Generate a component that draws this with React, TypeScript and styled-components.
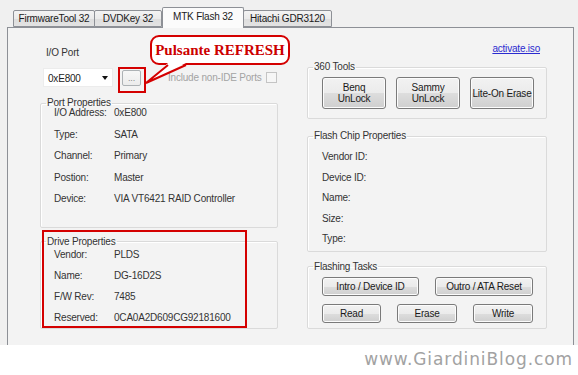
import styled, { createGlobalStyle } from "styled-components";

const GlobalStyle = createGlobalStyle`
  html, body {
    margin: 0;
    padding: 0;
    background: #fff;
  }
  body {
    font-family: "Liberation Sans", Arial, sans-serif;
  }
`;

const portRows = [
  ["I/O Address:", "0xE800"],
  ["Type:", "SATA"],
  ["Channel:", "Primary"],
  ["Postion:", "Master"],
  ["Device:", "VIA VT6421 RAID Controller"],
];

const driveRows = [
  ["Vendor:", "PLDS"],
  ["Name:", "DG-16D2S"],
  ["F/W Rev:", "7485"],
  ["Reserved:", "0CA0A2D609CG92181600"],
];

const chipRows = ["Vendor ID:", "Device ID:", "Name:", "Size:", "Type:"];

const App = () => {
  return (
    <Page>
      <GlobalStyle />
      <Window>
        <TabStrip>
          <Tab $w={82}>FirmwareTool 32</Tab>
          <Tab $w={68}>DVDKey 32</Tab>
          <Tab $w={82} $active>
            MTK Flash 32
          </Tab>
          <Tab $w={89}>Hitachi GDR3120</Tab>
        </TabStrip>
        <Panel>
          <LeftCol>
            <FieldLabel>I/O Port</FieldLabel>
            <PortRow>
              <Combo>0xE800</Combo>
              <Marked>
                <DotsButton>...</DotsButton>
              </Marked>
              <NonIde>
                Include non-IDE Ports
                <Check />
              </NonIde>
            </PortRow>
            <Group $mt={10}>
              <Legend>Port Properties</Legend>
              <Rows $mt={-7} $pb={17}>
                {portRows.map(([k, v]) => (
                  <Row key={k} $h={21.5}>
                    <Key>{k}</Key>
                    <span>{v}</span>
                  </Row>
                ))}
              </Rows>
            </Group>
            <DriveWrap>
              <Group>
                <Legend>Drive Properties</Legend>
                <Rows $mt={-3.5} $pb={0}>
                  {driveRows.map(([k, v]) => (
                    <Row key={k} $h={21}>
                      <Key>{k}</Key>
                      <span>{v}</span>
                    </Row>
                  ))}
                </Rows>
              </Group>
              <RedFrame />
            </DriveWrap>
          </LeftCol>

          <RightCol>
            <Link>activate.iso</Link>
            <Group $mt={6}>
              <Legend>360 Tools</Legend>
              <ButtonRow $mt={4} $pb={9} $gap={10}>
                <Button $w={64} $h={32}>
                  Benq
                  <br />
                  UnLock
                </Button>
                <Button $w={64} $h={32}>
                  Sammy
                  <br />
                  UnLock
                </Button>
                <Button $w={64} $h={32}>
                  Lite-On Erase
                </Button>
              </ButtonRow>
            </Group>
            <Group $mt={11}>
              <Legend>Flash Chip Properties</Legend>
              <Rows $mt={5} $pb={1} $pl={14}>
                {chipRows.map((k) => (
                  <Row key={k} $h={20.5}>
                    <span>{k}</span>
                  </Row>
                ))}
              </Rows>
            </Group>
            <Group $mt={9}>
              <Legend>Flashing Tasks</Legend>
              <ButtonRow $mt={4} $pb={0} $gap={16}>
                <Button $w={97} $h={19}>
                  Intro / Device ID
                </Button>
                <Button $w={98} $h={19}>
                  Outro / ATA Reset
                </Button>
              </ButtonRow>
              <ButtonRow $mt={8} $pb={5} $gap={16}>
                <Button $w={59} $h={19}>
                  Read
                </Button>
                <Button $w={60} $h={19}>
                  Erase
                </Button>
                <Button $w={60} $h={19}>
                  Write
                </Button>
              </ButtonRow>
            </Group>
          </RightCol>
        </Panel>
      </Window>
      <Watermark>www.GiardiniBlog.com</Watermark>

      <Bubble>Pulsante REFRESH</Bubble>
      <Tail width="60" height="40" viewBox="0 0 60 40">
        <polygon points="28,1 6,21 46,1" fill="#fff" />
        <polyline
          points="28,3 6,21 46,3"
          fill="none"
          stroke="#d40000"
          strokeWidth="2"
          strokeLinejoin="miter"
        />
      </Tail>
    </Page>
  );
};

export default App;

const Page = styled.div`
  position: relative;
  width: 578px;
  height: 375px;
  overflow: hidden;
  background: #fff;
  font-size: 10px;
  letter-spacing: -0.2px;
  color: #333;
`;

const Window = styled.div`
  height: 345px;
  background: #f0f0f0;
`;

const TabStrip = styled.div`
  height: 27px;
  padding-left: 14px;
  display: flex;
  align-items: flex-end;
`;

const Tab = styled.div<{ $w: number; $active?: boolean }>`
  box-sizing: border-box;
  width: ${(p) => p.$w}px;
  height: ${(p) => (p.$active ? 21 : 17)}px;
  margin-bottom: ${(p) => (p.$active ? -1 : 0)}px;
  margin-left: ${(p) => (p.$active ? 0 : -1)}px;
  position: relative;
  z-index: ${(p) => (p.$active ? 1 : 0)};
  border: 1px solid #8d9096;
  border-bottom: ${(p) => (p.$active ? "none" : "1px solid #8d9096")};
  border-radius: 2px 2px 0 0;
  background: ${(p) =>
    p.$active
      ? "#fbfbfb"
      : "linear-gradient(#f3f3f3, #ebebeb 50%, #dddddd 51%, #e3e3e3)"};
  display: flex;
  align-items: ${(p) => (p.$active ? "flex-start" : "center")};
  padding-top: ${(p) => (p.$active ? 3 : 0)}px;
  justify-content: center;
  color: #1a1a1a;
  white-space: nowrap;
`;

const Panel = styled.div`
  box-sizing: border-box;
  width: 567px;
  height: 318px;
  margin-left: 7px;
  border: 1px solid #8d9096;
  border-bottom: none;
  background: #f3f3f3;
  padding: 17px 0 0 32px;
  display: flex;
  gap: 29px;
`;

const LeftCol = styled.div`
  width: 238px;
  padding-top: 2px;
  display: flex;
  flex-direction: column;
`;

const RightCol = styled.div`
  width: 240px;
  display: flex;
  flex-direction: column;
`;

const FieldLabel = styled.div`
  margin-left: 6px;
  line-height: 12px;
`;

const PortRow = styled.div`
  margin-top: 9px;
  height: 19px;
  display: flex;
  align-items: center;
`;

const Combo = styled.div`
  position: relative;
  box-sizing: border-box;
  margin-left: 3px;
  width: 70px;
  height: 19px;
  padding-left: 4px;
  line-height: 19px;
  background: #fff;
  border: 1px solid #ececec;
  color: #222;

  &::after {
    content: "";
    position: absolute;
    right: 4px;
    top: 7px;
    border-left: 3.5px solid transparent;
    border-right: 3.5px solid transparent;
    border-top: 4px solid #111;
  }
`;

const Marked = styled.span`
  position: relative;
  margin-left: 9px;
  display: flex;

  &::after {
    content: "";
    position: absolute;
    left: -4px;
    top: -3px;
    right: -5px;
    bottom: -7px;
    border: 2px solid #d40000;
  }
`;

const DotsButton = styled.div`
  box-sizing: border-box;
  width: 19px;
  height: 16px;
  border: 1px solid #adb2b5;
  border-radius: 2px;
  background: linear-gradient(#f7f7f7, #ececec);
  color: #8a8a8a;
  font-size: 9px;
  text-align: center;
  line-height: 15px;
`;

const NonIde = styled.div`
  margin-left: 27px;
  color: #a3a3a3;
  display: flex;
  align-items: center;
  gap: 4px;
  white-space: nowrap;
`;

const Check = styled.span`
  box-sizing: border-box;
  width: 11px;
  height: 11px;
  border: 1px solid #c4c4c4;
  background: #f6f6f6;
`;

const Group = styled.fieldset<{ $mt?: number }>`
  box-sizing: border-box;
  margin: ${(p) => p.$mt ?? 0}px 0 0 0;
  padding: 0;
  min-width: 0;
  width: 100%;
  border: 1px solid #dadada;
  border-radius: 2px;
  box-shadow: inset 1px 1px 0 #fff;
`;

const Legend = styled.legend`
  margin-left: 5px;
  padding: 0 1px;
  line-height: 12px;
  color: #333;
`;

const Rows = styled.div<{ $mt: number; $pb: number; $pl?: number }>`
  margin-top: ${(p) => p.$mt}px;
  padding: 0 0 ${(p) => p.$pb}px ${(p) => p.$pl ?? 13}px;
`;

const Row = styled.div<{ $h: number }>`
  height: ${(p) => p.$h}px;
  line-height: ${(p) => p.$h}px;
  display: flex;
  white-space: nowrap;
`;

const Key = styled.span`
  width: 60px;
`;

const DriveWrap = styled.div`
  position: relative;
  margin-top: 8px;
`;

const RedFrame = styled.div`
  position: absolute;
  left: 2px;
  top: -6px;
  width: 205px;
  height: 98px;
  box-sizing: border-box;
  border: 2px solid #d40000;
  pointer-events: none;
`;

const Link = styled.div`
  margin-top: -2px;
  padding-right: 7px;
  text-align: right;
  line-height: 12px;
  color: #2b2bd0;
  text-decoration: underline;
`;

const ButtonRow = styled.div<{ $mt: number; $pb: number; $gap: number }>`
  margin-top: ${(p) => p.$mt}px;
  padding: 0 0 ${(p) => p.$pb}px 14px;
  display: flex;
  gap: ${(p) => p.$gap}px;
`;

const Button = styled.div<{ $w: number; $h: number }>`
  box-sizing: border-box;
  width: ${(p) => p.$w}px;
  height: ${(p) => p.$h}px;
  border: 1px solid #7a7a7a;
  border-radius: 3px;
  background: linear-gradient(#f2f2f2, #ebebeb 50%, #dddddd 51%, #cfcfcf);
  box-shadow: inset 0 0 0 1px #fcfcfc;
  color: #1a1a1a;
  display: flex;
  align-items: center;
  justify-content: center;
  text-align: center;
  line-height: 11px;
  white-space: nowrap;
`;

const Watermark = styled.div`
  padding: 3px 5px 0 0;
  text-align: right;
  font-family: "DejaVu Sans", sans-serif;
  font-size: 17px;
  line-height: 22px;
  letter-spacing: 0.9px;
  color: #a2a2a2;
`;

const Bubble = styled.div`
  position: absolute;
  left: 150px;
  top: 35px;
  width: 140px;
  height: 30px;
  box-sizing: border-box;
  border: 2px solid #d40000;
  border-radius: 9px;
  background: #fff;
  font-family: "Liberation Serif", "Times New Roman", serif;
  font-weight: bold;
  font-size: 15px;
  letter-spacing: 0;
  line-height: 26px;
  text-align: center;
  color: #cc0000;
  white-space: nowrap;
`;

const Tail = styled.svg`
  position: absolute;
  left: 140px;
  top: 62px;
  overflow: visible;
`;
